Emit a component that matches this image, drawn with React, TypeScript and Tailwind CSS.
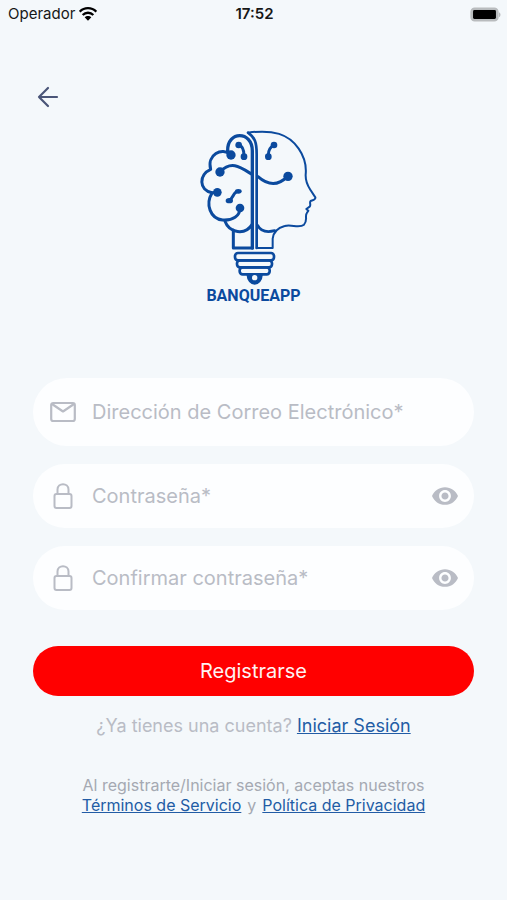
import React, { useState } from 'react';

const StatusBar: React.FC = () => (
  <div className="grid grid-cols-3 items-center h-7 pl-2 pr-1.5 text-[15px] text-neutral-900">
    <div className="flex items-center gap-1">
      <span>Operador</span>
      <svg viewBox="0 0 54 42" className="w-[18px] h-[14px]" fill="none" stroke="#000" strokeWidth="7">
        <path d="M2 14 C16 0 38 0 52 14" />
        <path d="M11 24 C20 15 34 15 43 24" />
        <path d="M27 41 L17 31 C22 26 32 26 37 31 Z" fill="#000" stroke="none" />
      </svg>
    </div>
    <span className="text-center font-semibold">17:52</span>
    <svg viewBox="0 0 92 44" className="w-[31px] h-[15px] justify-self-end">
      <rect x="3" y="3" width="80" height="38" rx="11" fill="#b9bcbe" stroke="#b9bcbe" strokeWidth="4" />
      <path d="M86 15 C92 18 92 27 86 30 Z" fill="#b9bcbe" />
      <rect x="9" y="9" width="68" height="26" rx="4" fill="#000" />
    </svg>
  </div>
);

const Logo: React.FC = () => (
  <div className="flex flex-col items-center">
    <svg
      viewBox="-3 27 387 471"
      className="w-[129px] h-[157px]"
      fill="none"
      stroke="#0b4a9e"
      strokeWidth="9"
      strokeLinecap="round"
      strokeLinejoin="round"
      role="img"
      aria-label="Banqueapp"
    >
      {/* face */}
      <path
        strokeWidth="6"
        d="M174 38 C250 28 296 42 326 86 C344 112 350 134 347 164 C346 188 355 200 362 211 L376 232 C378 239 370 240 362 243 C357 248 364 254 359 260 L349 267 L355 272 L350 280 C344 288 354 302 342 314 C328 326 304 312 284 318 C262 324 250 338 248 356 L248 384 L200 384"
      />
      <path strokeWidth="8" d="M200 384 L200 102 C200 66 194 52 174 38" />
      <path strokeWidth="8" d="M203 316 C212 334 230 338 254 332" />
      {/* brain */}
      <path strokeWidth="10" d="M187 384 L187 92 C186 32 112 32 113 92 L114 98" />
      <path d="M122 104 C96 80 50 104 62 148 C26 164 26 210 66 218 L82 217" />
      <path d="M66 219 C46 252 60 296 98 300 C128 302 150 288 150 264" />
      <path d="M105 304 C118 340 166 346 186 314" />
      <path d="M130 330 L130 384 L188 384" />
      <path d="M90 156 C124 120 152 142 184 162 M204 170 C238 200 266 196 292 170" />
      <path d="M146 75 C160 78 162 92 162 108 M252 75 C238 82 234 96 235 110" />
      <path d="M146 214 C128 214 132 236 116 242" />
      <g fill="#0b4a9e" stroke="none">
        <circle cx="123" cy="105" r="14" />
        <circle cx="90" cy="156" r="14" />
        <circle cx="82" cy="217" r="13" />
        <circle cx="150" cy="264" r="13" />
        <circle cx="294" cy="169" r="14" />
        <circle cx="146" cy="75" r="10" />
        <circle cx="162" cy="110" r="10" />
        <circle cx="252" cy="75" r="10" />
        <circle cx="235" cy="110" r="10" />
        <ellipse cx="145" cy="214" rx="10" ry="7" />
        <ellipse cx="118" cy="242" rx="11" ry="8" />
      </g>
      {/* bulb base */}
      <rect x="135" y="399" width="117" height="22" rx="9" strokeWidth="8" />
      <rect x="141" y="421" width="105" height="21" rx="9" strokeWidth="8" />
      <rect x="149" y="442" width="90" height="21" rx="9" strokeWidth="8" />
      <path d="M174 464 C176 498 212 498 214 464 Z" fill="#0b4a9e" />
      <circle cx="194" cy="473" r="8" fill="#f4f8fb" stroke="none" />
    </svg>
    <span className="font-['Roboto'] font-bold text-base leading-5 text-[#0b4a9e]">BANQUEAPP</span>
  </div>
);

const MailIcon: React.FC = () => (
  <svg viewBox="0 0 26 22" className="w-[26px] h-[22px]" fill="none" stroke="currentColor" strokeWidth="2.2" strokeLinejoin="round">
    <rect x="1.2" y="2" width="23.6" height="18" rx="2" />
    <path d="M2 3 L13 10.500 L24 3" />
  </svg>
);

const LockIcon: React.FC = () => (
  <svg viewBox="0 0 20 28" className="w-5 h-7" fill="none" stroke="currentColor" strokeWidth="2">
    <rect x="1.5" y="12" width="17" height="14" rx="2" />
    <path d="M4.5 12 V7.5 C4.5 0.5 15.5 0.5 15.5 7.5 V12" />
  </svg>
);

const EyeIcon: React.FC = () => (
  <svg viewBox="1 4.5 22 15" className="w-[26px] h-[18px]" fill="currentColor">
    <path d="M12 4.5C7 4.5 2.73 7.61 1 12c1.73 4.39 6 7.5 11 7.5s9.27-3.11 11-7.5c-1.73-4.39-6-7.5-11-7.5zM12 17c-2.76 0-5-2.24-5-5s2.24-5 5-5 5 2.24 5 5-2.24 5-5 5zm0-8c-1.66 0-3 1.34-3 3s1.34 3 3 3 3-1.34 3-3-1.34-3-3-3z" />
  </svg>
);

interface FieldProps {
  id: string;
  label: string;
  icon: React.ReactNode;
  secret?: boolean;
  className: string;
}

const Field: React.FC<FieldProps> = ({ id, label, icon, secret, className }) => {
  const [value, setValue] = useState('');
  const [visible, setVisible] = useState(false);

  return (
    <div className={`flex items-center bg-[#fdfeff] rounded-full px-4 text-[#b9bcc5] ${className}`}>
      <label htmlFor={id} className="flex w-7 justify-center">
        {icon}
      </label>
      <input
        id={id}
        type={secret && !visible ? 'password' : secret ? 'text' : 'email'}
        aria-label={label}
        placeholder={label}
        value={value}
        onChange={(e) => setValue(e.target.value)}
        className="flex-1 min-w-0 ml-[15px] text-xl text-gray-700 placeholder:text-[#b9bcc5] outline-none"
      />
      {secret && (
        <button type="button" aria-label="Mostrar contraseña" onClick={() => setVisible(!visible)}>
          <EyeIcon />
        </button>
      )}
    </div>
  );
};

const App: React.FC = () => {
  return (
    <div className="min-h-screen bg-[#f4f8fb] font-['Inter',sans-serif]">
      <StatusBar />
      <main className="px-[33px] pt-14">
        <button type="button" aria-label="Volver" className="block ml-0.5 p-0.5 text-[#4a5578]">
          <svg viewBox="0 0 22 22" className="w-[22px] h-[22px]" fill="none" stroke="currentColor" strokeWidth="2.2" strokeLinecap="round" strokeLinejoin="round">
            <path d="M20 11 H2 M11 2 L2 11 L11 20" />
          </svg>
        </button>
        <div className="mt-[19px]">
          <Logo />
        </div>

        <form className="mt-[72px] flex flex-col" onSubmit={(e) => e.preventDefault()}>
          <Field id="email" label="Dirección de Correo Electrónico*" icon={<MailIcon />} className="h-[68px]" />
          <Field id="password" label="Contraseña*" icon={<LockIcon />} secret className="h-16 mt-[18px]" />
          <Field id="confirm" label="Confirmar contraseña*" icon={<LockIcon />} secret className="h-16 mt-[18px]" />
          <button type="submit" className="h-[50px] mt-9 rounded-full bg-[#ff0000] text-xl text-red-50">
            Registrarse
          </button>
        </form>

        <p className="mt-[18px] text-center text-lg leading-6 text-[#b9bcc5]">
          ¿Ya tienes una cuenta?{' '}
          <a href="#login" className="text-[#225ca5] underline">Iniciar Sesión</a>
        </p>
        <p className="mt-[37px] text-center text-base leading-5 text-[#a5a9b2]">
          Al registrarte/Iniciar sesión, aceptas nuestros
          <br />
          <a href="#terms" className="text-[#225ca5] underline">Términos de Servicio</a>
          <span className="mx-1.5">y</span>
          <a href="#privacy" className="text-[#225ca5] underline">Política de Privacidad</a>
        </p>
      </main>
    </div>
  );
};

export default App;
